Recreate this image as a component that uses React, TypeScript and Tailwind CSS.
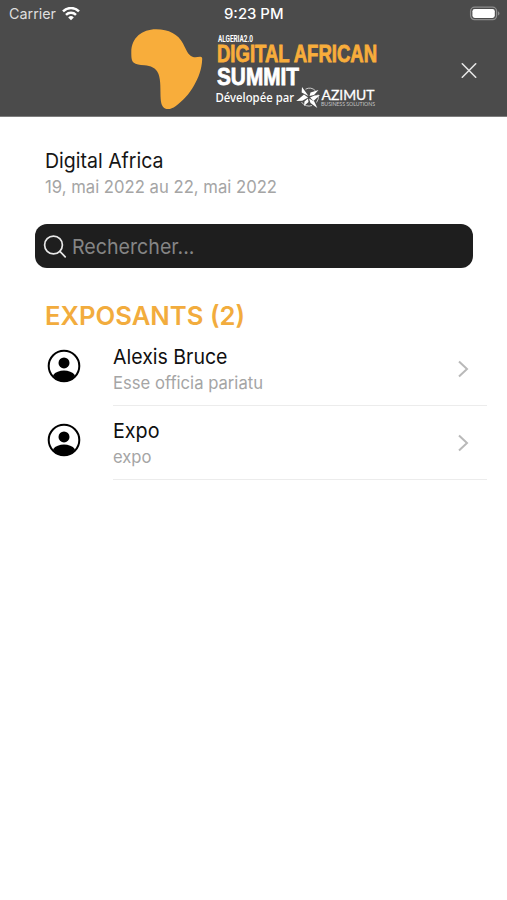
const EXHIBITORS = [
  { name: "Alexis Bruce", description: "Esse officia pariatu", nameWidth: 114.5, descriptionWidth: 150 },
  { name: "Expo", description: "expo", nameWidth: 46.5, descriptionWidth: 38.5 },
]

interface LabelProps {
  text: string
  width: number
  height: number
  size: number
  className: string
}

// One line of text fitted to a fixed advance width
function Label({ text, width, height, size, className }: LabelProps) {
  return (
    <svg width={width} height={height} className={`block overflow-visible ${className}`}>
      <text
        x="0"
        y={height * 0.78}
        fontSize={size}
        textLength={width}
        lengthAdjust="spacingAndGlyphs"
        fill="currentColor"
      >
        {text}
      </text>
    </svg>
  )
}

function StatusBar() {
  return (
    <div className="grid h-[27px] grid-cols-3 items-center pl-[9px] pr-[8px] text-white">
      <div className="flex items-center gap-[6px]">
        <Label text="Carrier" width={47} height={18} size={14.5} className="text-[#dedede]" />
        <svg width="18" height="14" viewBox="0 0 18 14" fill="none" stroke="currentColor" strokeWidth="2.5">
          <path d="M1 4.3a11.5 11.5 0 0 1 16 0" />
          <path d="M4 7.8a7.2 7.2 0 0 1 10 0" />
          <path d="M9 13.300 6.200 10.400a4 4 0 0 1 5.600 0Z" fill="currentColor" stroke="none" />
        </svg>
      </div>
      <div className="flex justify-center">
        <Label text="9:23 PM" width={59.5} height={18} size={14.2} className="font-medium" />
      </div>
      <div className="flex justify-end">
        <svg width="30" height="14" viewBox="0 0 30 14" className="overflow-visible">
          <rect x="1.6" y="0.2" width="26" height="12.4" rx="4" fill="none" stroke="#8d8d8d" strokeWidth="1.3" />
          <rect x="3.4" y="1.9" width="22.4" height="9" rx="2.3" fill="#fff" />
          <path d="M29 4.2c2 .8 2 3.600 0 4.400Z" fill="#8d8d8d" />
        </svg>
      </div>
    </div>
  )
}

function SummitLogo() {
  return (
    <svg width="250" height="86" viewBox="130 27 250 86" fill="#fff" className="overflow-visible">
      <path
        fill="#f8ad3b"
        d="M131.3 52C131.300 38 142 29.300 156 29.300c13 0 22 5 27 14.200 3 6 5 11.500 9.500 13.300 2.500 1 5 .3 7.500 0 1.800-.2 2.300.7 2.200 2.500-.4 10-3.700 18.500-8.200 26.200-5 9-11.500 15.500-18.500 20.700-3 2.200-6 3.200-9 2.700-4-.7-5.500-4.900-5.800-9.900-.5-9 .3-18-2.200-25-2.500-6.500-8-8-14-8.700-5-.6-8.500-.5-11-2.800-2-2-2.200-5-2.200-10.500Z"
      />
      <text
        x="218"
        y="41.600"
        fontFamily="Roboto, sans-serif"
        fontSize="9.500"
        fontWeight="700"
        textLength="35"
        lengthAdjust="spacingAndGlyphs"
      >
        ALGERIA2.0
      </text>
      <g fontFamily="'Liberation Sans', sans-serif" fontWeight="700">
        <text
          x="217"
          y="62.300"
          fontSize="23.400"
          fill="#f8ad3b"
          stroke="#f8ad3b"
          strokeWidth="0.8"
          textLength="160"
          lengthAdjust="spacingAndGlyphs"
        >
          DIGITAL AFRICAN
        </text>
        <text
          x="217"
          y="85.300"
          fontSize="23.400"
          stroke="#fff"
          strokeWidth="0.8"
          textLength="82"
          lengthAdjust="spacingAndGlyphs"
        >
          SUMMIT
        </text>
      </g>
      <g fontFamily="'Noto Sans', sans-serif">
        <text x="215.500" y="102" fontSize="12.800" fontWeight="500" textLength="78.500" lengthAdjust="spacingAndGlyphs">
          Dévelopée par
        </text>
      </g>
      <g fill="none" stroke="#c9c9c9" strokeWidth="1">
        <path d="M305.500 89.200a8.600 8.600 0 0 1 10 1.600" />
        <path d="M318 94.500a8.600 8.600 0 0 1-1.500 8" />
        <path d="M312 105.500a8.600 8.600 0 0 1-10.500-3.500" />
      </g>
      <path d="M308.500 96 302 87l-.3 5.500Z" />
      <path d="M308 97.500 304 94.500 296.300 101l6-.2Z" />
      <path d="M309.500 96 310.500 92.500l8-2.500-4.500 5Z" />
      <path d="M310 97.500 313.500 101l6.500-6-5.500.500Z" />
      <path d="M309 98.500 310.500 103l6.800 5-3-6.500Z" />
      <path d="M308 98.500 304.500 101.500l-.5 4.500 4.500-4Z" />
      <g fontFamily="Lato, sans-serif">
        <text x="321.500" y="99.600" fontSize="14" textLength="53" lengthAdjust="spacingAndGlyphs" stroke="#fff" strokeWidth="0.300">
          AZIMUT
        </text>
        <text x="321" y="105.800" fontSize="5" fill="#c4c4c4" textLength="54" lengthAdjust="spacingAndGlyphs">
          BUSINESS SOLUTIONS
        </text>
      </g>
    </svg>
  )
}

function Header() {
  return (
    <header className="h-[117px] border-b border-[#7d7d7d] bg-[#4b4b4b]">
      <StatusBar />
      <div className="flex items-center justify-between pl-[130px] pr-[30px]">
        <SummitLogo />
        <button aria-label="Fermer">
          <svg width="16" height="16" viewBox="0 0 16 16" fill="none" stroke="#e6e6e6" strokeWidth="1.6" strokeLinecap="round">
            <path d="m1.300 1.800 13.400 13.400M14.700 1.800 1.300 15.200" />
          </svg>
        </button>
      </div>
    </header>
  )
}

function SearchIcon() {
  return (
    <svg width="25" height="25" viewBox="0 0 25 25" fill="none" stroke="#e8e8e8" strokeWidth="1.7">
      <circle cx="10.500" cy="11" r="8.900" />
      <path d="m16.900 17.400 5.300 5.400" strokeLinecap="round" />
    </svg>
  )
}

function PersonIcon() {
  return (
    <svg width="34" height="34" viewBox="0 0 34 34">
      <circle cx="17" cy="17" r="15.300" fill="none" stroke="#000" strokeWidth="2" />
      <circle cx="17" cy="13.900" r="5.500" />
      <path d="M6 26.300c2.300-3.200 6.800-4.700 11-4.700s8.700 1.500 11 4.700A15 15 0 0 1 17 33 15 15 0 0 1 6 26.300Z" />
    </svg>
  )
}

export default function App() {
  return (
    <div className="min-h-[900px] w-[507px] bg-white font-['Inter','Liberation_Sans',sans-serif]">
      <Header />
      <main className="pt-[31px]">
        <div className="pl-[45px]">
          <Label text="Digital Africa" width={118.5} height={26} size={20.5} className="text-[#151515]" />
          <Label text="19, mai 2022 au 22, mai 2022" width={232} height={24} size={17.3} className="text-[#a5a5a5]" />
        </div>

        <div className="ml-[35px] mt-[26px] flex h-11 w-[438px] items-center gap-[4px] rounded-xl bg-[#1e1e1e] pl-[8px]">
          <SearchIcon />
          <Label text="Rechercher..." width={122.5} height={27} size={20.5} className="text-[#858585]" />
        </div>

        <div className="ml-[45px] mt-[30px]">
          <Label text="EXPOSANTS (2)" width={200} height={34} size={26} className="font-semibold text-[#f2ac3d]" />
        </div>

        <ul className="mt-[0.5px]">
          {EXHIBITORS.map((exhibitor) => (
            <li key={exhibitor.name} className="flex h-[73.5px] pl-[47px]">
              <div className="w-[66px] pt-[16.5px]">
                <PersonIcon />
              </div>
              <div className="mr-5 flex flex-1 items-start justify-between border-b border-[#ececec] pt-[11.5px]">
                <div>
                  <Label
                    text={exhibitor.name}
                    width={exhibitor.nameWidth}
                    height={26}
                    size={20.5}
                    className="text-[#101010]"
                  />
                  <Label
                    text={exhibitor.description}
                    width={exhibitor.descriptionWidth}
                    height={24}
                    size={17.3}
                    className="text-[#a5a5a5]"
                  />
                </div>
                <svg
                  width="12"
                  height="18"
                  viewBox="0 0 12 18"
                  fill="none"
                  stroke="#b9b9b9"
                  strokeWidth="2"
                  className="mr-[18px] mt-[16px]"
                >
                  <path d="m2 1.500 8 7.500-8 7.500" />
                </svg>
              </div>
            </li>
          ))}
        </ul>
      </main>
    </div>
  )
}
